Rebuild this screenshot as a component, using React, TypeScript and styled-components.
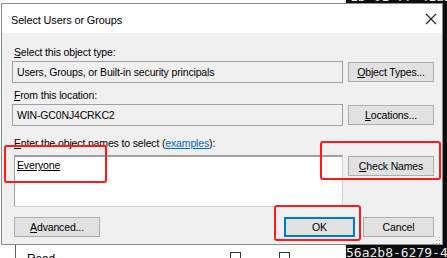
import React from "react";
import styled, { createGlobalStyle } from "styled-components";

const Global = createGlobalStyle`
  html, body {
    margin: 0;
    padding: 0;
    background: #ffffff;
    overflow: hidden;
  }
  body {
    font-family: "Liberation Sans", Arial, sans-serif;
    font-size: 10.5px;
    letter-spacing: -0.15px;
    color: #000;
  }
`;

const App = () => {
  return (
    <Desktop>
      <Global />
      <Terminal>
        <TermTop>1b 01 77 41a5-1</TermTop>
        <TermBottom>56a2b8-6279-45</TermBottom>
      </Terminal>
      <BackWindow>
        <BackRow>
          <GridLine />
          <BackCell>Read</BackCell>
          <Check style={{ left: 230 }} />
          <Check style={{ left: 279 }} />
        </BackRow>
      </BackWindow>
      <Dialog>
        <TitleBar>
          <Title>Select Users or Groups</Title>
          <Close>
            <svg width="12" height="12" viewBox="0 0 12 12">
              <path d="M1 1 L11 11 M11 1 L1 11" stroke="#222" strokeWidth="1.1" />
            </svg>
          </Close>
        </TitleBar>
        <Body>
          <Label>
            <u>S</u>elect this object type:
          </Label>
          <Row>
            <Field>Users, Groups, or Built-in security principals</Field>
            <Button>
              <u>O</u>bject Types...
            </Button>
          </Row>
          <Label>
            <u>F</u>rom this location:
          </Label>
          <Row $gap={10}>
            <Field>WIN-GC0NJ4CRKC2</Field>
            <Button>
              <u>L</u>ocations...
            </Button>
          </Row>
          <Label>
            <u>E</u>nter the object names to select (<Link>examples</Link>):
          </Label>
          <Row $top $gap={8}>
            <NamesBox>
              <Resolved>Everyone</Resolved>
            </NamesBox>
            <Button $drop>
              <u>C</u>heck Names
            </Button>
          </Row>
          <Footer>
            <Button>
              <u>A</u>dvanced...
            </Button>
            <Spacer />
            <Button $focus $narrow>
              OK
            </Button>
            <Button $narrow>Cancel</Button>
          </Footer>
          <Grip>
            <svg width="8" height="8" viewBox="0 0 8 8">
              <rect x="6" y="0" width="1" height="1" fill="#aaa" />
              <rect x="3" y="3" width="1" height="1" fill="#aaa" />
              <rect x="6" y="3" width="1" height="1" fill="#aaa" />
              <rect x="0" y="6" width="1" height="1" fill="#aaa" />
              <rect x="3" y="6" width="1" height="1" fill="#aaa" />
              <rect x="6" y="6" width="1" height="1" fill="#aaa" />
            </svg>
          </Grip>
        </Body>
      </Dialog>
      <Mark style={{ left: 4, top: 145, width: 103, height: 38 }} />
      <Mark style={{ left: 320, top: 141, width: 121, height: 39 }} />
      <Mark style={{ left: 274, top: 205, width: 87, height: 36 }} />
    </Desktop>
  );
};

export default App;

const Desktop = styled.div`
  position: relative;
  width: 447px;
  height: 258px;
  overflow: hidden;
  background: #ffffff;
`;

const Terminal = styled.div`
  position: absolute;
  left: 346px;
  top: 0;
  right: 0;
  bottom: 0;
  background: #0c0c0c;
  color: #e8e8e8;
  font-family: "DejaVu Sans Mono", monospace;
  font-size: 13px;
  letter-spacing: 0;
`;

const TermTop = styled.div`
  position: absolute;
  left: 4px;
  top: -11px;
  white-space: nowrap;
`;

const TermBottom = styled.div`
  position: absolute;
  left: 0;
  top: 245px;
  white-space: nowrap;
`;

const BackWindow = styled.div`
  position: absolute;
  left: 0;
  top: 240px;
  width: 346px;
  height: 18px;
  background: #ffffff;
`;

const BackRow = styled.div`
  position: relative;
  height: 100%;
`;

const GridLine = styled.div`
  position: absolute;
  left: 15px;
  top: 0;
  bottom: 0;
  width: 1px;
  background: #606060;
`;

const BackCell = styled.div`
  position: absolute;
  left: 27px;
  top: 12px;
  font-size: 12px;
`;

const Check = styled.div`
  position: absolute;
  top: 12px;
  width: 11px;
  height: 11px;
  border: 1px solid #333;
  box-sizing: border-box;
`;

const Dialog = styled.div`
  position: absolute;
  left: 1px;
  top: 3px;
  width: 442px;
  height: 242px;
  box-sizing: border-box;
  border: 1px solid #8a8a8a;
  background: #f0f0f0;
  display: flex;
  flex-direction: column;
`;

const TitleBar = styled.div`
  height: 29px;
  flex: none;
  background: #ffffff;
  display: flex;
  align-items: center;
  padding-left: 9px;
  padding-right: 5px;
`;

const Title = styled.div`
  flex: 1;
  font-size: 10.9px;
  letter-spacing: -0.1px;
  padding-top: 2px;
`;

const Close = styled.div`
  width: 12px;
  height: 12px;
  margin-top: 1px;
`;

const Body = styled.div`
  position: relative;
  flex: 1;
  padding: 12px 8px 0 10px;
  display: flex;
  flex-direction: column;
`;

const Label = styled.div`
  height: 14px;
  line-height: 14px;
  padding-left: 2px;
  margin-bottom: 2px;
  white-space: nowrap;
`;

const Row = styled.div<{ $top?: boolean; $gap?: number }>`
  display: flex;
  align-items: ${(p) => (p.$top ? "flex-start" : "center")};
  justify-content: space-between;
  margin-bottom: ${(p) => p.$gap ?? 5}px;
`;

const Field = styled.div`
  width: 331px;
  height: 22px;
  box-sizing: border-box;
  border: 1px solid #a0a0a0;
  background: #f0f0f0;
  padding-left: 4px;
  line-height: 20px;
  white-space: nowrap;
`;

const NamesBox = styled.div`
  width: 329px;
  height: 52px;
  margin-left: 2px;
  margin-top: 3px;
  box-sizing: border-box;
  border: 1px solid #d5d5d5;
  border-top: 2px solid #a0a0a0;
  border-left: 1px solid #a0a0a0;
  background: #ffffff;
  padding: 1px 2px;
`;

const Resolved = styled.span`
  text-decoration: underline;
  line-height: 14px;
`;

const Link = styled.span`
  color: #0066cc;
  text-decoration: underline;
`;

const Button = styled.div<{ $focus?: boolean; $narrow?: boolean; $drop?: boolean }>`
  width: ${(p) => (p.$narrow ? "71px" : "86px")};
  height: 20px;
  margin-top: ${(p) => (p.$drop ? "4px" : "0")};
  box-sizing: border-box;
  border: 1px solid ${(p) => (p.$focus ? "#0078d7" : "#adadad")};
  box-shadow: ${(p) => (p.$focus ? "inset 0 0 0 1px #0078d7" : "none")};
  background: #e1e1e1;
  display: flex;
  align-items: center;
  justify-content: center;
  white-space: nowrap;
`;

const Footer = styled.div`
  display: flex;
  align-items: center;
  gap: 8px;
  margin-top: 2px;
  padding-left: 2px;
`;

const Spacer = styled.div`
  flex: 1;
`;

const Grip = styled.div`
  position: absolute;
  right: 1px;
  bottom: 1px;
  width: 8px;
  height: 8px;
`;

const Mark = styled.div`
  position: absolute;
  box-sizing: border-box;
  border: 2.5px solid #ff1a1a;
  border-radius: 3px;
  pointer-events: none;
`;
